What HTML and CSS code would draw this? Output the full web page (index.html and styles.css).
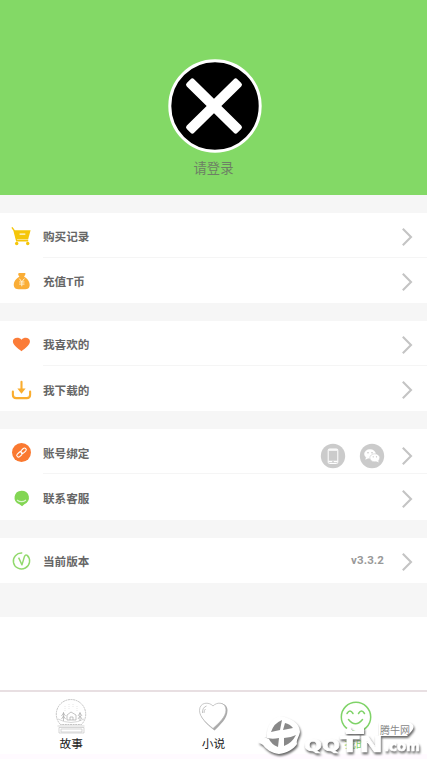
FILE: index.html
```html
<!DOCTYPE html>
<html lang="zh-CN">
<head>
<meta charset="utf-8">
<title>我的</title>
<link rel="stylesheet" href="styles.css">
</head>
<body>
<svg class="defs" width="0" height="0"><defs>
<symbol id="chev" viewBox="0 0 12 20"><path d="M1.8 1.8 10 10 1.8 18.2" fill="none" stroke="#c4c4c4" stroke-width="2.1"/></symbol>
</defs></svg>
<div class="app">
  <header class="profile">
    <svg class="avatar" viewBox="0 0 94 94"><circle cx="47" cy="47" r="45.2" fill="#000" stroke="#fff" stroke-width="3"/><g fill="#fff" transform="translate(46 47)"><rect x="-35.500" y="-5.200" width="71" height="10.400" rx="2.500" transform="rotate(44.500)"/><rect x="-35.500" y="-5.200" width="71" height="10.400" rx="2.500" transform="rotate(-44.500)"/></g></svg>
    <div class="login">请登录</div>
  </header>
  <main>
    <section class="group">
      <div class="row">
        <svg class="icon" viewBox="0 0 24 24"><path d="M2 2.500 4.200 5.500 7 16.500h12" fill="none" stroke="#f5c60a" stroke-width="1.500"/><path d="M4 5.500h17.500l-2.600 9.500H6.600z" fill="#f5c60a"/><path d="M10 9.500h6" stroke="#fff" stroke-width="1.200"/><circle cx="7" cy="19.300" r="1.800" fill="#f5c60a"/><circle cx="18.500" cy="19.300" r="1.800" fill="#f5c60a"/></svg>
        <div class="line"><span class="label">购买记录</span><svg class="chev"><use href="#chev"/></svg></div>
      </div>
      <div class="row">
        <svg class="icon" viewBox="0 0 24 24"><path d="M9 3h7v1.700L14.700 7c4 2 6.300 6 5.800 9.500-.4 2.800-2.200 3.500-4.500 3.500H9c-2.700 0-4.700-.8-5-3.500C3.600 12.500 6 9 9.800 7L8.500 5z" fill="#faad36"/><path d="m9.800 9 2.500 3.400L15 9M12.300 12v5M9.600 12.500h5.500M9.600 14.700h5.500" fill="none" stroke="#fff1d5" stroke-width="1"/></svg>
        <div class="line"><span class="label">充值T币</span><svg class="chev"><use href="#chev"/></svg></div>
      </div>
    </section>
    <section class="group">
      <div class="row">
        <svg class="icon" viewBox="0 0 24 24"><path d="M12 19C8 16 3 12.600 3 8.700 3 4.700 9 3.400 12 7c3-3.600 8.800-2.300 8.800 1.700C20.800 12.600 16 16 12 19z" fill="#fb7c38"/></svg>
        <div class="line"><span class="label">我喜欢的</span><svg class="chev"><use href="#chev"/></svg></div>
      </div>
      <div class="row">
        <svg class="icon" viewBox="0 0 24 24"><path d="M3 13v3.500q0 3.500 3.500 3.500h11q3.500 0 3.500-3.500V13" fill="none" stroke="#faad2f" stroke-width="2.200" stroke-linecap="round"/><path d="M12 3v8" stroke="#faad2f" stroke-width="2.200" stroke-linecap="round"/><path d="M7.700 10h8.600L12 15.300z" fill="#faad2f"/></svg>
        <div class="line"><span class="label">我下载的</span><svg class="chev"><use href="#chev"/></svg></div>
      </div>
    </section>
    <section class="group">
      <div class="row bind">
        <svg class="icon" viewBox="0 0 24 24"><circle cx="12" cy="12" r="9.900" fill="#fa7930"/><g fill="none" stroke="#fff" stroke-width="1.100"><rect x="-3.200" y="-1.800" width="6.400" height="3.600" rx="1.800" transform="translate(14.100 10.100) rotate(-43)"/><rect x="-3.200" y="-1.800" width="6.400" height="3.600" rx="1.800" transform="translate(9.900 14) rotate(-43)"/></g></svg>
        <div class="line"><span class="label">账号绑定</span>
          <svg class="badge phone" viewBox="0 0 26 26"><circle cx="13" cy="13" r="12.200" fill="#cbcbcb"/><rect x="8.200" y="6" width="9.600" height="14.500" rx="1.200" fill="#cbcbcb" stroke="#fff"/><path d="M8.500 7h9M8.500 18.500h9" stroke="#fff" stroke-width="1.600"/><circle cx="13" cy="18.700" r=".7" fill="#bbb"/></svg>
          <svg class="badge wechat" viewBox="0 0 26 26"><circle cx="13" cy="13" r="12.200" fill="#cbcbcb"/><ellipse cx="11" cy="11" rx="5.800" ry="4.700" fill="#fff"/><path d="m7 14-.7 2.700 3-1.500z" fill="#fff"/><ellipse cx="15.800" cy="14.800" rx="5" ry="4" fill="#fff" stroke="#cbcbcb" stroke-width=".6"/><path d="m17 18 2.600 1.500-.5-2.500z" fill="#fff"/><g fill="#bbb"><circle cx="9" cy="9.800" r=".7"/><circle cx="13" cy="9.800" r=".7"/><circle cx="14.200" cy="13.800" r=".6"/><circle cx="17.500" cy="13.800" r=".6"/></g></svg>
          <svg class="chev"><use href="#chev"/></svg></div>
      </div>
      <div class="row">
        <svg class="icon" viewBox="0 0 24 24"><path d="M12 3.800a7.500 7.300 0 0 1 3 14.100L12.600 20 9.800 18A7.500 7.300 0 0 1 12 3.800z" fill="#83d654"/><path d="M7.300 13.500q4.700 3.600 9.400 0" fill="none" stroke="#dcf6cf" stroke-width="1.200"/></svg>
        <div class="line"><span class="label">联系客服</span><svg class="chev"><use href="#chev"/></svg></div>
      </div>
    </section>
    <section class="group">
      <div class="row">
        <svg class="icon" viewBox="0 0 24 24"><path d="M12.800 3.200A8.500 8.300 0 1 0 18 5.600q-2-1.400-3 1.400L12.500 15.500 9 8" fill="none" stroke="#91d96c" stroke-width="1.500" stroke-linejoin="round"/></svg>
        <div class="line"><span class="label">当前版本</span><span class="version">v3.3.2</span><svg class="chev"><use href="#chev"/></svg></div>
      </div>
    </section>
  </main>
  <nav>
    <div class="tab">
      <svg viewBox="0 0 36 36"><g fill="none" stroke="#aaa" stroke-width=".7"><path d="M7.500 25.500A14.700 14.700 0 1 1 28.500 25.500z" stroke-dasharray="2 .6"/><path d="M5 20q13 7 26 0M4.500 27h27M6 28.500v5.500h25v-5.500zM8 30h21v3H8z" stroke="#c4c4c4"/><path d="M14 21v-5l4-3 5 3v5zM17 21v-3h3v3M10.500 13v9M8.500 17l2-3 2 3M8.500 20l2-3 2 3M27 13v9M25 17l2-3 2 3M25 20l2-3 2 3" stroke="#aaa"/><path d="M12 7v5M16 5v5M20 5v4M24 7v5" stroke="#ddd" stroke-dasharray="1 1"/></g></svg>
      <span>故事</span>
    </div>
    <div class="tab">
      <svg viewBox="0 0 36 36"><path d="M19.500 31.500C14 27 5 20 5 12.500 5 4 15 3 18.500 9 22 2.500 32.500 3 32.500 11.500 32.500 19.500 25 26 19.500 31.500z" fill="#aaa"/><path d="M18 29.500C12.500 25 4.500 18.500 4.500 11.500 4.500 3 14 2.500 18 7 22 2.500 31 3 31 11 31 18 23.500 24.500 18 29.500z" fill="#fff" stroke="#b2b2b2" stroke-width=".7"/><path d="M7.500 14q-.3-5.500 4-7M9 14q0-3 1.500-4" fill="none" stroke="#aaa" stroke-width=".7"/></svg>
      <span>小说</span>
    </div>
    <div class="tab active">
      <svg viewBox="0 0 36 36"><g fill="none" stroke="#7fd368" stroke-width="1.500" stroke-linecap="round"><circle cx="18" cy="18" r="14.700"/><path d="M9 14.500q3-5 6 0M20.500 14.500q3-5 6 0M10.500 20.500q7 8.500 14 0"/></g></svg>
      <span>我的</span>
    </div>
  </nav>
  <svg class="mark" viewBox="0 0 177 59">
    <g class="raised">
      <path d="M29 16c11 1 21 7 21 16-1 5-4 8-3 12-3 5-10 9-18 10-8-1-13-5-16-9L8 42l9-5c-1-9 4-18 12-21z"/>
      <path d="M95 31q2-4 6-4-1 3 3 4l10-4v7H96zM129 22h29q10 3 2 11l-3 3h-28z"/>
      <g class="letters"><text x="54" y="51" textLength="36" lengthAdjust="spacingAndGlyphs" font-size="16">QQ</text><text x="90" y="52" textLength="43" lengthAdjust="spacingAndGlyphs" font-size="22">TN</text><text x="134" y="51" textLength="36" lengthAdjust="spacingAndGlyphs" font-size="14">.com</text></g>
    </g>
    <path d="M32 20q-8 3-11 12l9-2zM35 23l-2 7 10-2q-3-4-8-5zM14 37q7 3 15 1l-1 9q-7-3-9-8zM34 38q6 0 12-3-4 8-12 11z" fill="#888"/>
    <text class="site" x="130" y="33.500" textLength="30" lengthAdjust="spacingAndGlyphs">腾牛网</text>
  </svg>
</div>
</body>
</html>
```
FILE: styles.css
```css
* { box-sizing: border-box; }
body { margin: 0; font-family: Roboto, "Noto Sans CJK SC", sans-serif; background: #fff; }
.defs { position: absolute; }
.app { position: relative; width: 427px; height: 759px; overflow: hidden; display: flex; flex-direction: column; }
.profile { height: 195px; flex: none; background: #83d966; display: flex; flex-direction: column; align-items: center; padding-top: 59px; }
.avatar { width: 94px; height: 94px; margin-left: 2px; }
.login { margin-top: 6px; font-size: 13.300px; line-height: 20px; color: #6d8065; }
main { height: 422px; flex: none; background: #f6f6f6; padding-top: 17.500px; display: flex; flex-direction: column; gap: 18px; }
.group { background: #fff; }
.row { display: flex; height: 45.200px; padding-left: 10px; }
.icon { width: 23px; height: 23px; margin: 12.500px 10px 0 0; flex: none; }
.bind .icon { margin-top: 11.500px; margin-left: -.5px; margin-right: 10.500px; }
.line { flex: 1; display: flex; align-items: center; padding: 4px 14px 0 0; border-bottom: 1px solid #f5f5f5; }
.row:last-child .line { border-bottom-color: transparent; }
.label { font-size: 11.600px; font-weight: 700; color: #666; margin: 1px auto 0 0; line-height: 16px; }
.chev { width: 12px; height: 20px; flex: none; }
.bind .chev { margin-top: 6px; }
.bind .label { margin-top: 2px; }
.badge { width: 26px; height: 26px; margin-top: 6px; }
.phone { margin-right: 13px; }
.wechat { margin-right: 16.500px; }
.version { font-size: 11.500px; font-weight: 700; color: #999; margin: -4px 17px 0 0; letter-spacing: .1px; }
nav { margin-top: 73px; height: 69px; flex: none; border-top: 2px solid #e8dfe2; display: grid; grid-template-columns: repeat(3, 1fr); box-shadow: inset 0 -5px #fffaff; }
.tab { display: flex; flex-direction: column; align-items: center; padding-top: 7px; font-size: 11.700px; line-height: 18px; color: #222; }
.tab svg { width: 36px; height: 36px; }
.active { color: #7fd368; }
.mark { position: absolute; left: 250px; top: 700px; width: 177px; height: 59px; }
.raised { fill: #fff; filter: drop-shadow(1.500px 2px 1.200px #666); }
.letters { font-family: "DejaVu Sans", sans-serif; font-weight: 700; stroke: #fff; stroke-width: .6px; }
.site { font-size: 10.500px; fill: #888; }
```
